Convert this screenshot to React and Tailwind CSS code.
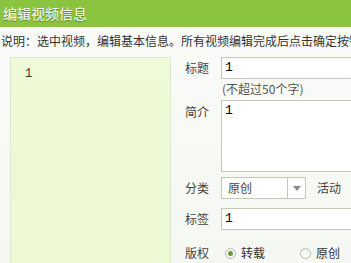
import React from 'react';

const font = { fontFamily: '"Noto Sans CJK SC", "Liberation Sans", sans-serif' };

const Label = ({ children }) => (
  <div className="w-[50px] pl-[14px] text-[12px] leading-[14px] text-[#444] flex items-center shrink-0 whitespace-nowrap">{children}</div>
);

const Radio = ({ checked, label }) => (
  <div className="flex items-center">
    <span className="w-[11px] h-[11px] rounded-full border border-[#b9bdb2] bg-gradient-to-b from-[#f1f1ee] to-white flex items-center justify-center">
      {checked && <span className="w-[5px] h-[5px] rounded-full bg-[#6c9a3a]" />}
    </span>
    <span className="ml-[5px] text-[12px] text-[#333]">{label}</span>
  </div>
);

const App = () => {
  return (
    <div className="w-[351px] h-[263px] overflow-hidden bg-gradient-to-b from-[#fbfcf9] to-[#f5f7f2]" style={font}>
      {/* header */}
      <div className="h-[27px] bg-[#8bc43f] flex items-center pl-[3px]">
        <span className="text-[14px] text-white" style={{ textShadow: '0 1px 1px rgba(60,90,20,0.6)' }}>编辑视频信息</span>
      </div>

      {/* note */}
      <div className="h-[30px] flex items-center pb-[2px] pl-[1px] whitespace-nowrap text-[12px] text-[#333]">
        说明：选中视频，编辑基本信息。所有视频编辑完成后点击确定按钮
      </div>

      <div className="flex">
        {/* left list */}
        <div className="ml-[10px] w-[161px] h-[240px] shrink-0 bg-gradient-to-b from-[#effad8] to-[#ecf8d2] border border-[#dfe8cc] pl-[14px] pt-[8px] text-[12px] leading-[16px] text-[#333]" style={{ fontFamily: '"Liberation Mono", monospace' }}>
          1
        </div>

        {/* form */}
        <div className="flex flex-col">
          <div className="flex h-[22px]">
            <Label>标题</Label>
            <div className="w-[200px] h-[22px] bg-white border border-[#c4c8b8] pl-[3px] text-[13px] leading-[20px] text-black" style={{ fontFamily: '"Liberation Mono", monospace' }}>1</div>
          </div>
          <div className="flex h-[21px]">
            <div className="w-[50px] shrink-0" />
            <div className="pl-[1px] pt-[3px] text-[12px] leading-[14px] text-[#555] whitespace-nowrap">(不超过50个字)</div>
          </div>
          <div className="flex h-[72px]">
            <div className="w-[50px] pl-[14px] pt-[5px] text-[12px] leading-[14px] text-[#444] shrink-0 whitespace-nowrap">简介</div>
            <div className="w-[200px] h-[72px] bg-white border border-[#c4c8b8] pl-[3px] pt-[1px] text-[13px] leading-[18px] text-black" style={{ fontFamily: '"Liberation Mono", monospace' }}>1</div>
          </div>
          <div className="flex h-[22px] mt-[5px]">
            <Label>分类</Label>
            <div className="w-[85px] h-[22px] bg-white border border-[#c4c8b8] flex shrink-0">
              <div className="flex-1 pl-[6px] text-[12px] leading-[20px] text-[#444]">原创</div>
              <div className="w-[18px] border-l border-[#c4c8b8] flex items-center justify-center">
                <span className="w-0 h-0 border-l-[4px] border-r-[4px] border-t-[5px] border-l-transparent border-r-transparent border-t-[#8a8a8a]" />
              </div>
            </div>
            <div className="ml-[11px] text-[12px] leading-[22px] text-[#444] whitespace-nowrap">活动</div>
          </div>
          <div className="flex h-[22px] mt-[9px]">
            <Label>标签</Label>
            <div className="w-[200px] h-[22px] bg-white border border-[#c4c8b8] pl-[3px] text-[13px] leading-[20px] text-black" style={{ fontFamily: '"Liberation Mono", monospace' }}>1</div>
          </div>
          <div className="flex h-[22px] mt-[12px]">
            <Label>版权</Label>
            <div className="flex items-center pl-[4px] gap-[35px]">
              <Radio checked label="转载" />
              <Radio label="原创" />
            </div>
          </div>
        </div>
      </div>
    </div>
  );
};

export default App;
